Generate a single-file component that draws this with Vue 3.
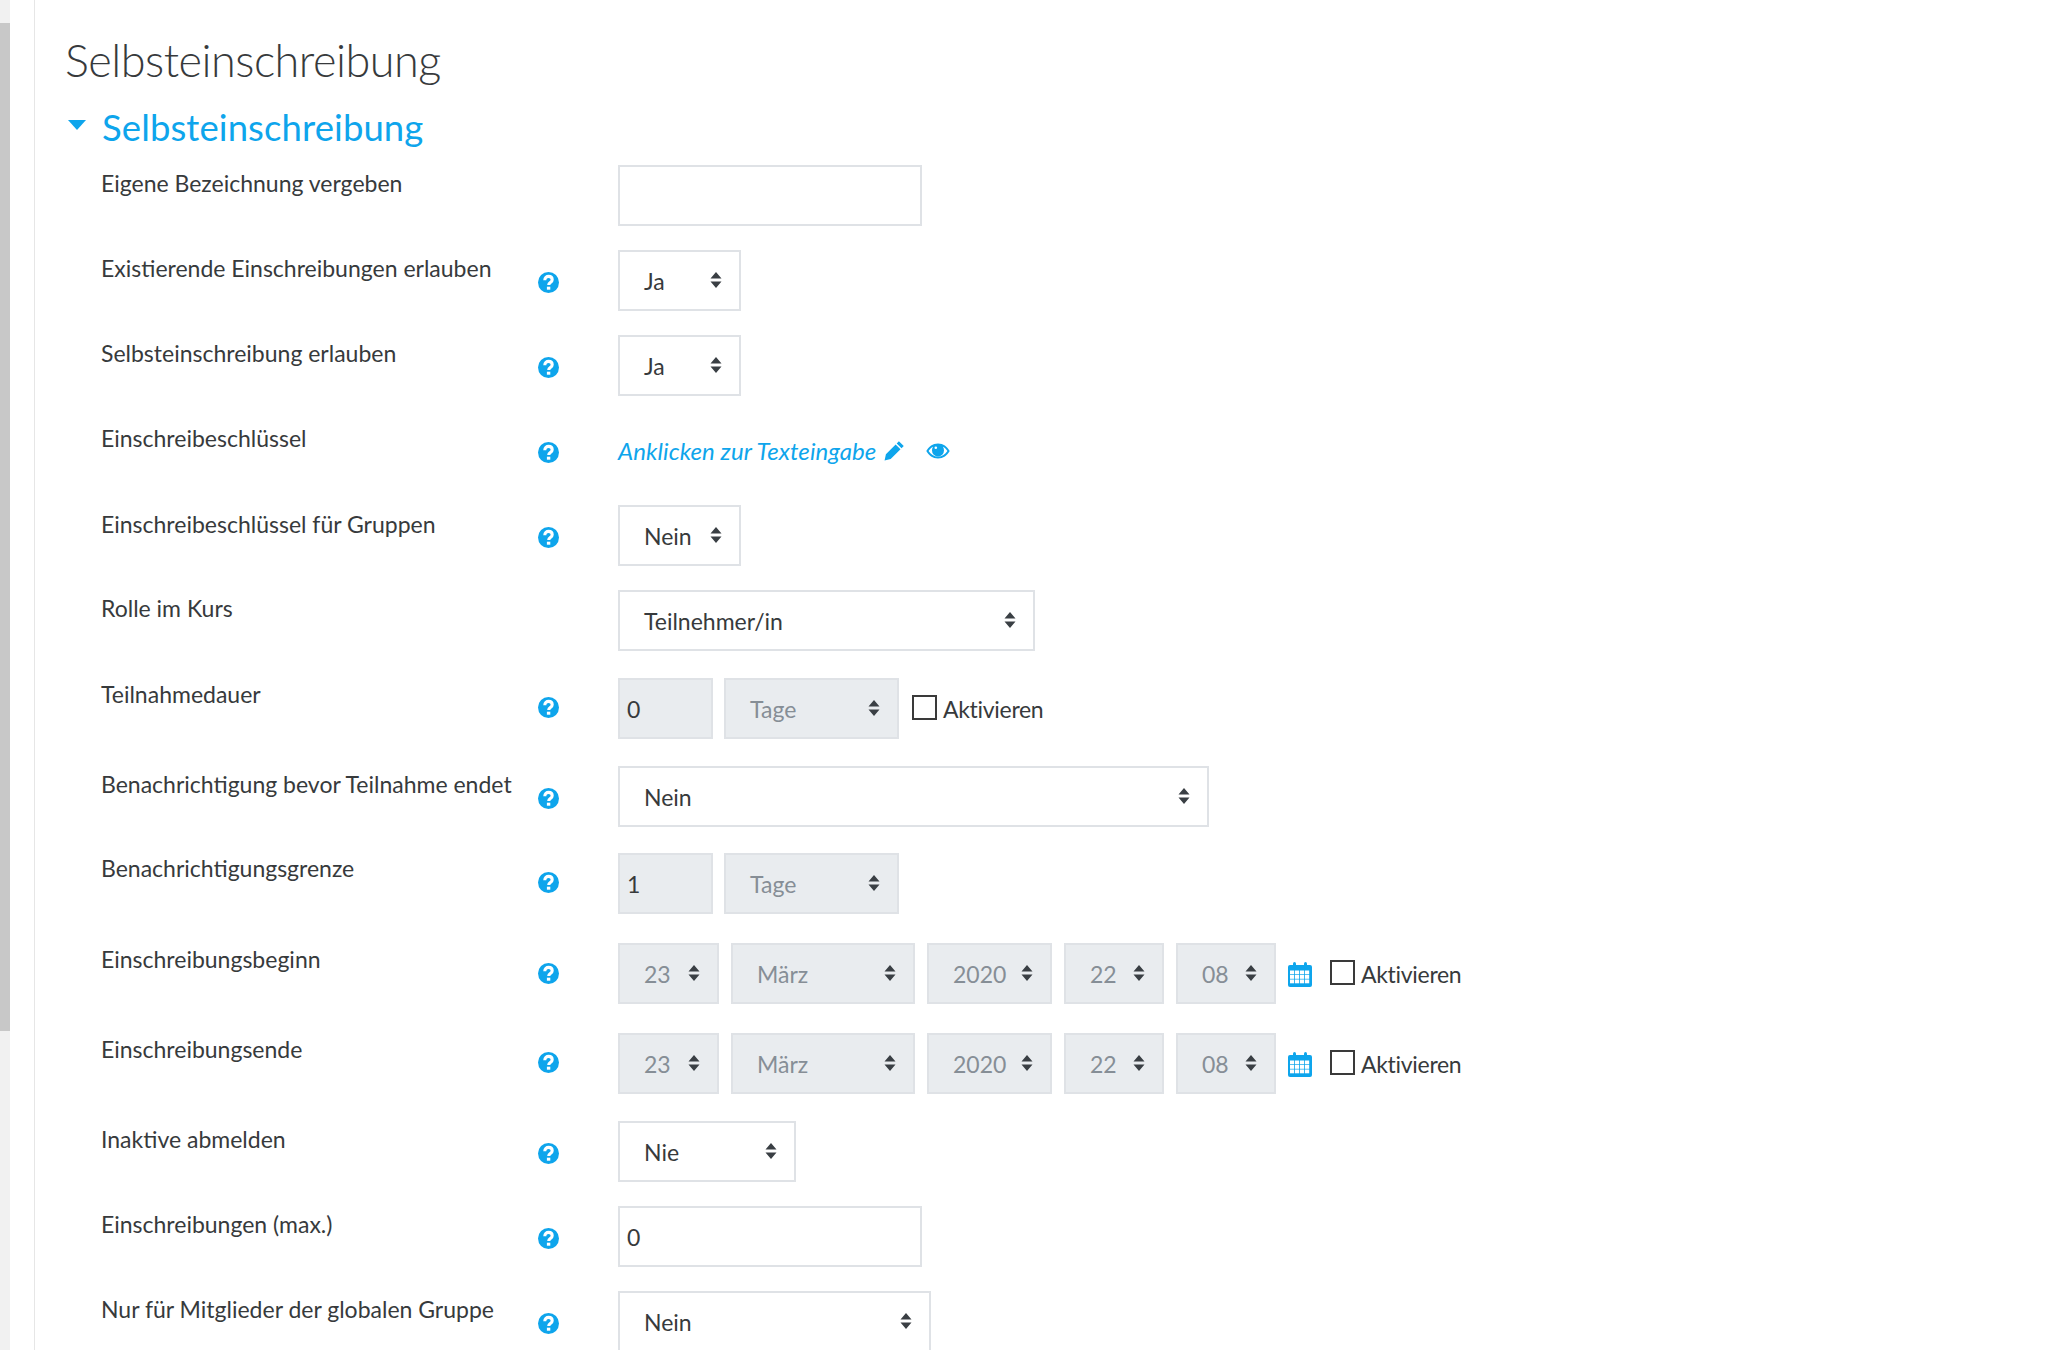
<script setup>
const d = { d: true }
const rows = [
  { label: 'Eigene Bezeichnung vergeben', top: 165, controls: [{ t: 'input', w: 304, v: '' }] },
  { label: 'Existierende Einschreibungen erlauben', help: 1, top: 250, controls: [{ t: 'select', w: 123, v: 'Ja' }] },
  { label: 'Selbsteinschreibung erlauben', help: 1, top: 335, controls: [{ t: 'select', w: 123, v: 'Ja' }] },
  { label: 'Einschreibeschlüssel', help: 1, top: 420, link: 1, controls: [] },
  { label: 'Einschreibeschlüssel für Gruppen', help: 1, top: 505, lo: 1, controls: [{ t: 'select', w: 123, v: 'Nein' }] },
  { label: 'Rolle im Kurs', top: 590, controls: [{ t: 'select', w: 417, v: 'Teilnehmer/in' }] },
  { label: 'Teilnahmedauer', help: 1, top: 678, lo: -2, ho: -3, check: 1, controls: [{ t: 'input', w: 95, v: '0', d }, { t: 'select', w: 175, v: 'Tage', d }] },
  { label: 'Benachrichtigung bevor Teilnahme endet', help: 1, top: 766, controls: [{ t: 'select', w: 591, v: 'Nein' }] },
  { label: 'Benachrichtigungsgrenze', help: 1, top: 853, lo: -3, ho: -3, controls: [{ t: 'input', w: 95, v: '1', d }, { t: 'select', w: 175, v: 'Tage', d }] },
  { label: 'Einschreibungsbeginn', help: 1, top: 943, lo: -2, ho: -2, date: 1, check: 1, controls: dateControls() },
  { label: 'Einschreibungsende', help: 1, top: 1033, lo: -2, ho: -3, date: 1, check: 1, controls: dateControls() },
  { label: 'Inaktive abmelden', help: 1, top: 1121, controls: [{ t: 'select', w: 178, v: 'Nie' }] },
  { label: 'Einschreibungen (max.)', help: 1, top: 1206, controls: [{ t: 'input', w: 304, v: '0' }] },
  { label: 'Nur für Mitglieder der globalen Gruppe', help: 1, top: 1291, controls: [{ t: 'select', w: 313, v: 'Nein' }] },
]
function dateControls() {
  return [
    { t: 'select', w: 101, v: '23', d },
    { t: 'select', w: 184, v: 'März', d },
    { t: 'select', w: 125, v: '2020', d },
    { t: 'select', w: 100, v: '22', d },
    { t: 'select', w: 100, v: '08', d },
  ]
}
function gap(i) {
  return i === 0 ? 0 : rows[i].top - rows[i - 1].top - 61
}
const cells = []
for (const y of [8.5, 13, 17.5]) for (const x of [2, 7, 12, 17]) cells.push([x, y])
</script>

<template>
  <div class="page">
    <div class="scroll"><div class="thumb"></div></div>
    <main class="main">
      <h2 class="title">Selbsteinschreibung</h2>
      <div class="section">
        <svg class="caret" viewBox="0 0 18 10"><path d="M0 0h18L9 10z" /></svg>
        <h3 class="sub">Selbsteinschreibung</h3>
      </div>
      <form class="form" @submit.prevent>
        <div v-for="(r, i) in rows" :key="i" class="row" :style="{ marginTop: gap(i) + 'px' }">
          <div class="label" :style="{ marginTop: (r.lo || 0) + 'px' }">{{ r.label }}</div>
          <div class="help" :style="{ marginTop: (r.ho || 0) + 'px' }">
            <svg v-if="r.help" viewBox="0 0 21 21" class="q">
              <circle cx="10.5" cy="10.5" r="10.5" />
              <path d="M6.800 8.200c0-2.400 1.700-3.800 3.800-3.800s3.600 1.300 3.600 3.300c0 2.900-3.500 2.700-3.500 5.200" class="qs" />
              <rect x="8.900" y="14.700" width="3.400" height="3" fill="#fff" />
            </svg>
          </div>
          <div class="controls" :class="{ date: r.date }">
            <template v-for="(c, j) in r.controls" :key="j">
              <div v-if="c.t === 'input'" class="box input" :class="{ dis: c.d }" :style="{ width: c.w + 'px' }">{{ c.v }}</div>
              <div v-else class="box select" :class="{ dis: c.d }" :style="{ width: c.w + 'px' }">
                <span>{{ c.v }}</span>
                <svg class="arrows" viewBox="0 0 12 16"><path d="M6 0l5.500 6.500H.5zM6 16L.5 9.500h11z" /></svg>
              </div>
            </template>
            <div v-if="r.link" class="link">
              <a>Anklicken zur Texteingabe</a>
              <svg class="pencil" viewBox="0 0 22 22"><path d="M15.600 1.300l5.100 5.100-2.300 2.300-5.100-5.100zM12.200 4.700l5.100 5.100L7 20 .6 21.400 2 15z" /></svg>
              <svg class="eye" viewBox="0 0 24 16">
                <path d="M12 .5C6.800.5 2.700 3.600.3 8c2.400 4.400 6.500 7.500 11.700 7.500S21.300 12.400 23.700 8C21.300 3.600 17.200.5 12 .5zm0 13.200C8 13.700 4.700 11.400 2.600 8c1.100-1.900 2.700-3.400 4.500-4.300A6 6 0 0 0 6 7.500a6 6 0 0 0 12 0c0-1.400-.4-2.700-1.100-3.800 1.800.9 3.400 2.400 4.500 4.300-2.100 3.400-5.400 5.700-9.400 5.700z" />
                <circle cx="9.800" cy="4.800" r="1.300" fill="#fff" />
              </svg>
            </div>
            <svg v-if="r.date" class="cal" viewBox="0 0 24 25">
              <path d="M2 3h20a2 2 0 0 1 2 2v18a2 2 0 0 1-2 2H2a2 2 0 0 1-2-2V5a2 2 0 0 1 2-2z" />
              <rect x="5" y="0" width="3" height="6.500" rx="1.500" />
              <rect x="16" y="0" width="3" height="6.500" rx="1.500" />
              <g fill="#fff">
                <rect v-for="p in cells" :key="p.join()" :x="p[0]" :y="p[1]" width="4.200" height="3.800" />
              </g>
            </svg>
            <div v-if="r.check" class="check" :class="{ datecheck: r.date }">
              <span class="cb"></span><span class="cbt">Aktivieren</span>
            </div>
          </div>
        </div>
      </form>
    </main>
  </div>
</template>

<style scoped>
.page {
  display: flex;
  width: 2048px;
  height: 1350px;
  overflow: hidden;
  background: #fff;
  font-family: Lato, "Open Sans", sans-serif;
  color: #373a3c;
}
.scroll { width: 10px; background: #f1f1f1; flex: none; padding-top: 23px; }
.thumb { height: 1008px; background: #c8c8c8; }
.main {
  flex: 1;
  margin-left: 24px;
  border-left: 1px solid #e6e6e6;
  padding-left: 31px;
}
.title {
  margin: 32px 0 0 -1px;
  font-size: 45px;
  line-height: 56px;
  font-weight: 300;
  letter-spacing: -0.5px;
  color: #373a3c;
}
.section { display: flex; align-items: center; margin-top: 17px; height: 44px; }
.caret { width: 18px; height: 10px; fill: #0ea5ec; margin: -4px 0 0 2px; }
.sub {
  margin: 0 0 0 16px;
  font-size: 36.5px;
  font-weight: 400;
  letter-spacing: 0.1px;
  color: #0ea5ec;
  line-height: 44px;
}
.form { margin-top: 16px; }
.row { display: flex; height: 61px; }
.label { width: 429px; margin-left: 35px; flex: none; font-size: 23px; line-height: 30px; padding-top: 3px; white-space: nowrap; }
.help { width: 80px; flex: none; margin-left: 8px; padding-top: 22px; }
.q { width: 21px; height: 21px; display: block; fill: #0ea5ec; }
.qs { fill: none; stroke: #fff; stroke-width: 3.100; }
.controls { display: flex; gap: 11px; align-items: flex-start; }
.controls.date { gap: 12px; }
.box {
  box-sizing: border-box;
  height: 61px;
  border: 2px solid #dfe2e6;
  font-size: 23px;
  display: flex;
  align-items: center;
  background: #fff;
  flex: none;
}
.input { padding-left: 7px; }
.select { padding: 0 17px 0 24px; justify-content: space-between; }
.dis { background: #e9ecef; color: #868e96; }
.input.dis { color: #373a3c; }
.arrows { width: 12px; height: 16px; fill: #3a3f44; margin-top: -2px; }
.link { display: flex; align-items: center; height: 61px; color: #0ea5ec; font-size: 24px; letter-spacing: 0.1px; font-style: italic; }
.pencil { width: 21px; height: 21px; fill: #0ea5ec; margin-left: 8px; }
.eye { width: 24px; height: 16px; fill: #0ea5ec; margin-left: 21px; }
.cal { width: 24px; height: 25px; fill: #0ea5ec; margin: 19px 0 0 0; }
.check { display: flex; align-items: center; gap: 6px; height: 61px; font-size: 23px; margin-left: 2px; }
.datecheck { margin-left: 6px; }
.cbt { letter-spacing: -0.3px; padding-top: 1px; }
.cb { width: 25px; height: 25px; box-sizing: border-box; border: 2px solid #3a3a3a; background: #fff; margin-top: -2px; }
</style>
